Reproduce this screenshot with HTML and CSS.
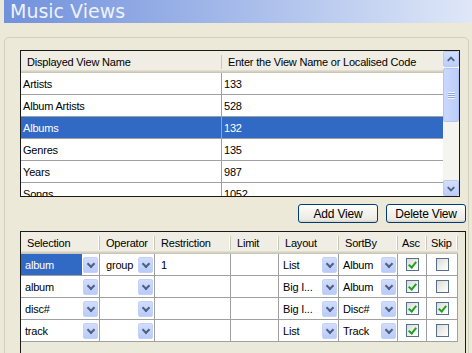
FILE: index.html
```html
<!DOCTYPE html>
<html>
<head>
<meta charset="utf-8">
<title>Music Views</title>
<link rel="stylesheet" href="styles.css">
</head>
<body>
<div class="titlebar">Music Views</div>
<div class="group">
  <div class="list">
    <div class="list-main">
      <div class="lrow lhead"><div class="lc c1">Displayed View Name</div><div class="lc c2">Enter the View Name or Localised Code</div></div>
      <div class="lrow"><div class="lc c1">Artists</div><div class="lc c2">133</div></div>
      <div class="lrow"><div class="lc c1">Album Artists</div><div class="lc c2">528</div></div>
      <div class="lrow sel"><div class="lc c1">Albums</div><div class="lc c2">132</div></div>
      <div class="lrow"><div class="lc c1">Genres</div><div class="lc c2">135</div></div>
      <div class="lrow"><div class="lc c1">Years</div><div class="lc c2">987</div></div>
      <div class="lrow"><div class="lc c1">Songs</div><div class="lc c2">1052</div></div>
    </div>
    <div class="vscroll">
      <div class="sbtn up"><svg width="15" height="15" viewBox="0 0 15 15"><path d="M4 9 L7.5 5.5 L11 9" fill="none" stroke="#4d6185" stroke-width="2"/></svg></div>
      <div class="track">
        <div class="thumb"><span class="grip"></span></div>
      </div>
      <div class="sbtn down"><svg width="15" height="15" viewBox="0 0 15 15"><path d="M4 6 L7.5 9.5 L11 6" fill="none" stroke="#4d6185" stroke-width="2"/></svg></div>
    </div>
  </div>

  <div class="buttons">
    <button class="btn">Add View</button>
    <button class="btn">Delete View</button>
  </div>

  <div class="grid">
    <div class="grow ghead">
      <div class="gh">Selection</div>
      <div class="gh">Operator</div>
      <div class="gh">Restriction</div>
      <div class="gh">Limit</div>
      <div class="gh">Layout</div>
      <div class="gh">SortBy</div>
      <div class="gh narrow">Asc</div>
      <div class="gh narrow">Skip</div>
    </div>
    <div class="grow">
      <div class="gc combo sel"><span class="ct">album</span><span class="dd"></span></div>
      <div class="gc combo"><span class="ct op">group</span><span class="dd"></span></div>
      <div class="gc txt">1</div>
      <div class="gc"></div>
      <div class="gc combo"><span class="ct">List</span><span class="dd"></span></div>
      <div class="gc combo"><span class="ct">Album</span><span class="dd"></span></div>
      <div class="gc chk"><span class="cb on"></span></div>
      <div class="gc chk"><span class="cb"></span></div>
    </div>
    <div class="grow">
      <div class="gc combo"><span class="ct">album</span><span class="dd"></span></div>
      <div class="gc combo"><span class="ct op"></span><span class="dd"></span></div>
      <div class="gc txt"></div>
      <div class="gc"></div>
      <div class="gc combo"><span class="ct">Big I...</span><span class="dd"></span></div>
      <div class="gc combo"><span class="ct">Album</span><span class="dd"></span></div>
      <div class="gc chk"><span class="cb on"></span></div>
      <div class="gc chk"><span class="cb"></span></div>
    </div>
    <div class="grow">
      <div class="gc combo"><span class="ct">disc#</span><span class="dd"></span></div>
      <div class="gc combo"><span class="ct op"></span><span class="dd"></span></div>
      <div class="gc txt"></div>
      <div class="gc"></div>
      <div class="gc combo"><span class="ct">Big I...</span><span class="dd"></span></div>
      <div class="gc combo"><span class="ct">Disc#</span><span class="dd"></span></div>
      <div class="gc chk"><span class="cb on"></span></div>
      <div class="gc chk"><span class="cb on"></span></div>
    </div>
    <div class="grow">
      <div class="gc combo"><span class="ct">track</span><span class="dd"></span></div>
      <div class="gc combo"><span class="ct op"></span><span class="dd"></span></div>
      <div class="gc txt"></div>
      <div class="gc"></div>
      <div class="gc combo"><span class="ct">List</span><span class="dd"></span></div>
      <div class="gc combo"><span class="ct">Track</span><span class="dd"></span></div>
      <div class="gc chk"><span class="cb on"></span></div>
      <div class="gc chk"><span class="cb"></span></div>
    </div>
  </div>
</div>
</body>
</html>
```

FILE: styles.css
```css
* { box-sizing: border-box; }
html, body {
  margin: 0;
  padding: 0;
  width: 472px;
  height: 353px;
  overflow: hidden;
  background: #ece9d8;
  font-family: "Liberation Sans", Arial, sans-serif;
  font-size: 11px;
  letter-spacing: -0.2px;
  color: #000;
}

.titlebar {
  margin-left: 4px;
  height: 23px;
  line-height: 23px;
  padding-left: 6px;
  font-family: "DejaVu Sans", Verdana, sans-serif;
  font-size: 19px;
  letter-spacing: 0;
  color: #eef2fb;
  background: linear-gradient(to right, #7191dc 0%, #a6bbea 50%, #dfe7f8 100%);
}

.group {
  margin-top: 14px;
  margin-left: 4px;
  width: 465px;
  height: 330px;
  border: 1px solid #d0d0bf;
  border-radius: 5px;
  padding: 12px 2px 0 15px;
}

/* upper list */
.list {
  width: 440px;
  height: 147px;
  border: 1px solid #1a1a1a;
  background: #fff;
  display: flex;
  overflow: hidden;
}
.list-main {
  flex: 1;
  overflow: hidden;
}
.lrow {
  display: flex;
  height: 22px;
  border-bottom: 1px solid #a0a0a0;
}
.lc {
  height: 100%;
  display: flex;
  align-items: center;
  padding-left: 2px;
  white-space: nowrap;
  overflow: hidden;
}
.c1 { width: 201px; border-right: 1px solid #a0a0a0; }
.c2 { flex: 1; }
.lrow.sel { background: #316ac5; color: #fff; }
.lhead {
  background: #efede4;
  border-bottom: none;
  box-shadow: inset 0 -1px 0 #cbc7b8, inset 0 -2px 0 #d6d2c2, inset 0 -3px 0 #e2decd;
}
.lhead .lc { padding-left: 6px; border-right: none; position: relative; }
.lhead .c1::after {
  content: "";
  position: absolute;
  right: 0;
  top: 4px;
  bottom: 4px;
  width: 1px;
  background: #cbc7b8;
  box-shadow: 1px 0 0 #fff;
}

.vscroll {
  width: 16px;
  display: flex;
  flex-direction: column;
  background: #f5f4ee;
}
.sbtn {
  width: 16px;
  height: 16px;
  border: 1px solid #b9c9f3;
  border-radius: 2px;
  background: linear-gradient(to bottom, #d3defc, #bccdf8);
  display: flex;
  align-items: center;
  justify-content: center;
}
.track {
  flex: 1;
  padding-top: 1px;
}
.thumb {
  height: 54px;
  border: 1px solid #b2c5f2;
  border-radius: 2px;
  background: linear-gradient(to right, #c9d8fc, #bccdf9);
  display: flex;
  align-items: center;
  justify-content: center;
}
.grip {
  width: 7px;
  height: 7px;
  background: repeating-linear-gradient(to bottom, #eef3fe 0 1px, #8ca5dc 1px 2px);
}

/* buttons */
.buttons {
  margin-top: 7px;
  display: flex;
  justify-content: flex-end;
  gap: 8px;
}
.btn {
  width: 80px;
  height: 19px;
  padding: 0;
  border: 1px solid #003c74;
  border-radius: 3px;
  background: linear-gradient(to bottom, #ffffff 0%, #f4f3ee 40%, #ecebe4 85%, #d8d2c6 100%);
  font-family: "Liberation Sans", Arial, sans-serif;
  font-size: 12px;
  letter-spacing: -0.2px;
  color: #000;
}

/* lower grid */
.grid {
  margin-top: 8px;
  width: 446px;
  height: 140px;
  border: 1px solid #1a1a1a;
  background: #ebe9da;
}
.grow {
  display: grid;
  grid-template-columns: 79px 55px 76px 48px 60px 59px 29px 31px;
  height: 22px;
}
.ghead {
  height: 22px;
}
.gh {
  position: relative;
  display: flex;
  align-items: center;
  padding-left: 6px;
  background: #efede4;
  box-shadow: inset 0 -1px 0 #cbc7b8, inset 0 -2px 0 #d6d2c2, inset 0 -3px 0 #e2decd;
  white-space: nowrap;
}
.gh::after {
  content: "";
  position: absolute;
  right: 0;
  top: 4px;
  bottom: 4px;
  width: 1px;
  background: #cbc7b8;
  box-shadow: -1px 0 0 #fff;
}
.gh.narrow { padding-left: 4px; }
.gc {
  background: #fff;
  border-right: 1px solid #a0a0a0;
  border-bottom: 1px solid #a0a0a0;
  display: flex;
  align-items: center;
  white-space: nowrap;
  overflow: hidden;
}
.combo { padding-right: 1px; }
.ct {
  flex: 1;
  height: 100%;
  display: flex;
  align-items: center;
  padding-left: 4px;
  overflow: hidden;
}
.ct.op { padding-left: 6px; }
.combo.sel .ct {
  background: #316ac5;
  color: #fff;
  margin-right: 1px;
}
.dd {
  position: relative;
  width: 15px;
  height: 16px;
  border: 1px solid #c2d2fb;
  border-radius: 2px;
  background: linear-gradient(to bottom, #d2ddfc, #b9cbf8);
  flex: none;
}
.dd::after {
  content: "";
  position: absolute;
  left: 4px;
  top: 3px;
  width: 4px;
  height: 4px;
  border-right: 2px solid #4d6185;
  border-bottom: 2px solid #4d6185;
  transform: rotate(45deg);
}
.txt { padding-left: 6px; }
.chk { justify-content: center; }
.cb {
  position: relative;
  width: 13px;
  height: 13px;
  border: 1px solid #55708f;
  background: linear-gradient(135deg, #dcdcd5 0%, #f2f2ee 60%, #ffffff 100%);
}
.cb.on::after {
  content: "";
  position: absolute;
  left: 3px;
  top: 1px;
  width: 3px;
  height: 6px;
  border-right: 2px solid #21a121;
  border-bottom: 2px solid #21a121;
  transform: rotate(40deg);
}
```
